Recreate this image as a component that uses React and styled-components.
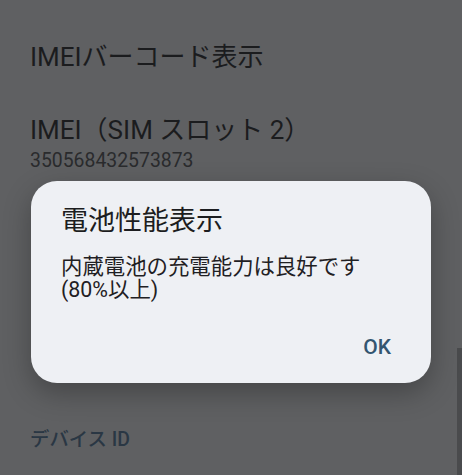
import React from "react";
import styled, { createGlobalStyle } from "styled-components";

const Global = createGlobalStyle`
  html, body {
    margin: 0;
    padding: 0;
    width: 462px;
    height: 475px;
    overflow: hidden;
    background: #5f6062;
  }
  * { box-sizing: border-box; }
  body {
    font-family: Roboto, "Noto Sans CJK JP", "Noto Sans", sans-serif;
  }
`;

const Page = styled.div`
  position: relative;
  width: 462px;
  height: 475px;
  background: #5f6062;
  overflow: hidden;
`;

const List = styled.div`
  display: flex;
  flex-direction: column;
  padding: 21px 0 0 30px;
`;

const Item = styled.div`
  display: flex;
  flex-direction: column;
  padding: 20px 0 21px;
`;

const CoveredItems = styled.div`
  height: 204px;
`;

const ItemTitle = styled.div`
  font-size: 26px;
  line-height: 32px;
  color: #1b1c1e;
  white-space: nowrap;
`;

const ItemSub = styled.div`
  margin-top: 2px;
  font-size: 19.4px;
  line-height: 26px;
  color: #2a2b2d;
  white-space: nowrap;
`;

const Category = styled.div`
  padding-top: 28px;
  font-size: 19.4px;
  line-height: 26px;
  color: #2a3744;
  font-weight: 500;
`;

const Scrollbar = styled.div`
  position: absolute;
  right: 0;
  top: 348px;
  width: 5px;
  height: 127px;
  background: #4a4b4d;
`;

const Dialog = styled.div`
  position: absolute;
  left: 31px;
  top: 181px;
  width: 400px;
  height: 202px;
  border-radius: 26px;
  background: #eef0f4;
  box-shadow: 0 10px 28px rgba(0, 0, 0, 0.28);
  padding: 23px 30px 0 30px;
  display: flex;
  flex-direction: column;
`;

const DialogTitle = styled.div`
  font-size: 27px;
  line-height: 34px;
  color: #1c1d20;
`;

const DialogBody = styled.div`
  margin-top: 17px;
  font-size: 21.4px;
  line-height: 23px;
  color: #1f2023;
`;

const Actions = styled.div`
  margin-top: auto;
  display: flex;
  justify-content: flex-end;
  padding: 0 10px 22px 0;
`;

const TextButton = styled.button`
  border: none;
  background: none;
  padding: 0;
  font-family: inherit;
  font-size: 21px;
  line-height: 28px;
  font-weight: 500;
  color: #335570;
  cursor: pointer;
`;

export default function App() {
  return (
    <Page>
      <Global />
      <List>
        <Item>
          <ItemTitle>IMEIバーコード表示</ItemTitle>
        </Item>
        <Item>
          <ItemTitle>IMEI（SIM スロット 2）</ItemTitle>
          <ItemSub>350568432573873</ItemSub>
        </Item>
        <CoveredItems aria-hidden="true" />
        <Category>デバイス ID</Category>
      </List>
      <Scrollbar />
      <Dialog role="dialog">
        <DialogTitle>電池性能表示</DialogTitle>
        <DialogBody>
          内蔵電池の充電能力は良好です
          <br />
          (80%以上)
        </DialogBody>
        <Actions>
          <TextButton>OK</TextButton>
        </Actions>
      </Dialog>
    </Page>
  );
}
